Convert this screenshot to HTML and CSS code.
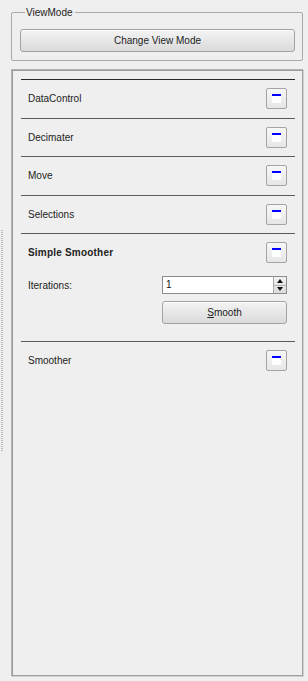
FILE: index.html
```html
<!DOCTYPE html>
<html>
<head>
<meta charset="utf-8">
<link rel="stylesheet" href="styles.css">
</head>
<body>
<div class="app">
  <div class="gutter"><div class="handle"></div></div>
  <div class="main">
    <fieldset class="group">
      <legend>ViewMode</legend>
      <button class="btn wide">Change View Mode</button>
    </fieldset>
    <div class="panel">
      <div class="section first">
        <div class="header"><span>DataControl</span><span class="toggle"><i></i></span></div>
      </div>
      <div class="section">
        <div class="header"><span>Decimater</span><span class="toggle"><i></i></span></div>
      </div>
      <div class="section">
        <div class="header"><span>Move</span><span class="toggle"><i></i></span></div>
      </div>
      <div class="section">
        <div class="header"><span>Selections</span><span class="toggle"><i></i></span></div>
      </div>
      <div class="section">
        <div class="header"><span class="bold">Simple Smoother</span><span class="toggle"><i></i></span></div>
        <div class="body">
          <span class="label">Iterations:</span>
          <div class="spin">
            <span class="value">1</span>
            <span class="arrows">
              <span class="arrow up"></span>
              <span class="arrow down"></span>
            </span>
          </div>
          <span></span>
          <button class="btn smooth"><u>S</u>mooth</button>
        </div>
      </div>
      <div class="section">
        <div class="header"><span>Smoother</span><span class="toggle"><i></i></span></div>
      </div>
    </div>
  </div>
</div>
</body>
</html>
```

FILE: styles.css
```css
html, body {
  margin: 0;
  padding: 0;
  background: #efefef;
}
body {
  font-family: "Liberation Sans", Arial, sans-serif;
  font-size: 10px;
  color: #222;
}
.app {
  display: flex;
  height: 681px;
}
.gutter {
  width: 11px;
  display: flex;
  align-items: center;
}
.handle {
  margin-left: 1px;
  width: 2px;
  height: 222px;
  background-image: linear-gradient(#bdbdbd 50%, transparent 50%);
  background-size: 2px 2px;
}
.main {
  flex: 1;
  display: flex;
  flex-direction: column;
  padding-right: 5px;
  padding-bottom: 5px;
}
.group {
  margin: 6px 0 0 0;
  padding: 10px 7px 8px 8px;
  border: 1px solid #a9a9a9;
  border-radius: 2px;
  min-inline-size: 0;
}
.group legend {
  padding: 0 2px 0 1px;
  margin-left: 5px;
  line-height: 13px;
  font-size: 10px;
  color: #222;
}
.btn {
  display: block;
  font-family: "Liberation Sans", Arial, sans-serif;
  font-size: 10px;
  color: #222;
  background: linear-gradient(#f4f4f4, #dadada);
  border: 1px solid #a3a3a3;
  border-radius: 3px;
  padding: 0;
  box-shadow: inset 0 1px 0 #fdfdfd;
}
.wide {
  width: 100%;
  height: 23px;
}
.panel {
  flex: 1;
  margin-top: 8px;
  border: 1px solid #a0a0a0;
  border-top-color: #b4b4b4;
  border-left-color: #b4b4b4;
  box-shadow: 1px 1px 0 #d0d0d0, inset 1px 1px 0 #9c9c9c;
  padding: 9px 7px 0 9px;
}
.section {
  border-top: 1px solid #5c5c5c;
}
.section.first {
  border-top-color: #2a2a2a;
}
.header {
  height: 37.5px;
  display: flex;
  align-items: center;
  justify-content: space-between;
  padding: 0 8px 0 7px;
}
.bold {
  font-weight: bold;
  letter-spacing: 0.2px;
}
.toggle {
  width: 19px;
  height: 19px;
  border: 1px solid #a4a4a4;
  border-radius: 2px;
  background: linear-gradient(#f7f7f7, #e6e6e6);
  display: flex;
  align-items: center;
  justify-content: center;
}
.toggle i {
  display: block;
  width: 9px;
  height: 7px;
  background: #fff;
  border-top: 2px solid #0000ff;
}
.body {
  display: grid;
  grid-template-columns: 134px 1fr;
  row-gap: 7px;
  align-items: center;
  padding: 4.5px 8px 17px 7px;
}
.spin {
  height: 16px;
  border: 1px solid #8c8c8c;
  background: #fff;
  display: flex;
  align-items: stretch;
}
.spin .value {
  flex: 1;
  padding-left: 3px;
  line-height: 16px;
  font-size: 10px;
  color: #111;
}
.arrows {
  width: 12px;
  display: flex;
  flex-direction: column;
  border-left: 1px solid #a8a8a8;
  background: linear-gradient(#f2f2f2, #dcdcdc);
}
.arrow {
  flex: 1;
  display: flex;
  align-items: center;
  justify-content: center;
}
.arrow.up {
  border-bottom: 1px solid #b0b0b0;
}
.arrow::before {
  content: "";
  width: 0;
  height: 0;
  border-left: 3px solid transparent;
  border-right: 3px solid transparent;
}
.arrow.up::before {
  border-bottom: 4px solid #111;
}
.arrow.down::before {
  border-top: 4px solid #111;
}
.smooth {
  width: 100%;
  height: 23px;
}
.smooth u {
  text-underline-offset: 1px;
}
```
